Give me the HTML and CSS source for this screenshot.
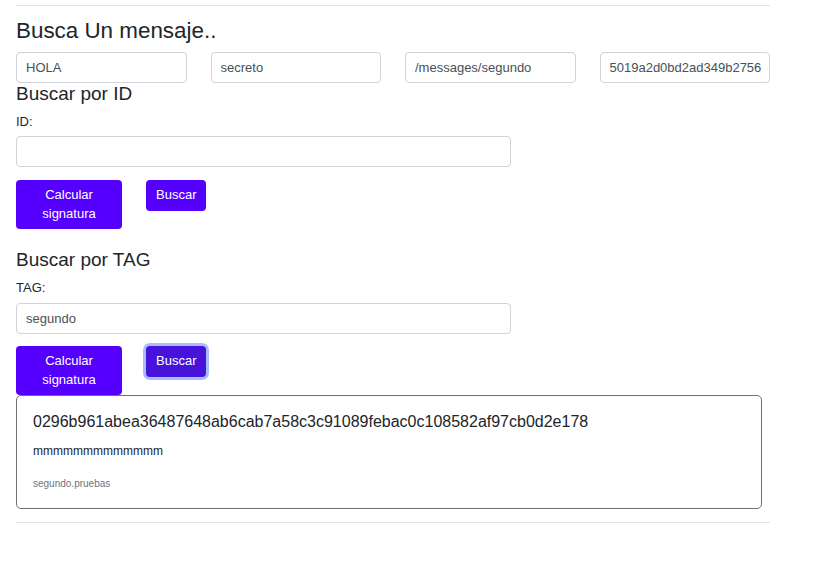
FILE: index.html
```html
<!DOCTYPE html>
<html lang="es">
<head>
<meta charset="utf-8">
<title>Busca Un mensaje</title>
<link rel="stylesheet" href="styles.css">
</head>
<body>
<div class="page">
  <hr class="rule rule-top">
  <h2 class="title">Busca Un mensaje..</h2>
  <div class="fields">
    <input class="field" type="text" value="HOLA">
    <input class="field" type="text" value="secreto">
    <input class="field" type="text" value="/messages/segundo">
    <input class="field" type="text" value="5019a2d0bd2ad349b2756">
  </div>

  <section class="search">
    <h3 class="sub">Buscar por ID</h3>
    <label class="label">ID:</label>
    <input class="field wide" type="text" value="">
    <div class="actions">
      <button class="btn btn-calc">Calcular signatura</button>
      <button class="btn">Buscar</button>
    </div>
  </section>

  <section class="search second">
    <h3 class="sub">Buscar por TAG</h3>
    <label class="label">TAG:</label>
    <input class="field wide" type="text" value="segundo">
    <div class="actions">
      <button class="btn btn-calc">Calcular signatura</button>
      <button class="btn focused">Buscar</button>
    </div>
  </section>

  <div class="card">
    <div class="hash">0296b961abea36487648ab6cab7a58c3c91089febac0c108582af97cb0d2e178</div>
    <div class="msg">mmmmmmmmmmmmm</div>
    <div class="tag">segundo.pruebas</div>
  </div>
  <hr class="rule rule-bottom">
</div>
</body>
</html>
```
FILE: styles.css
```css
* { box-sizing: border-box; }
html, body { margin: 0; padding: 0; background: #fff; }
body {
  font-family: "Liberation Sans", Arial, sans-serif;
  color: #212529;
  font-size: 13px;
  line-height: 1.5;
}
.page {
  width: 754px;
  margin-left: 16px;
  padding-top: 5px;
}
.rule {
  border: 0;
  border-top: 1px solid #e3e3e3;
  margin: 0;
}
.title {
  font-size: 22.4px;
  font-weight: 400;
  line-height: 1.2;
  margin: 12px 0 7px;
}
.fields {
  display: grid;
  grid-template-columns: repeat(4, 1fr);
  column-gap: 24px;
}
.field {
  display: block;
  height: 31px;
  padding: 0 0 0 9px;
  font-family: "Liberation Sans", Arial, sans-serif;
  font-size: 13px;
  color: #495057;
  border: 1px solid #ced4da;
  border-radius: 4px;
  background: #fff;
  width: 100%;
  outline: none;
}
.field.wide { width: 495px; }
.sub {
  font-size: 19px;
  font-weight: 400;
  line-height: 1.2;
  margin: 0;
}
.second .sub { margin-top: 20px; }
.label {
  display: block;
  font-size: 13px;
  line-height: 19.5px;
  margin: 6px 0 5px;
}
.second .label { margin-bottom: 6px; }
.actions {
  display: flex;
  align-items: flex-start;
  gap: 24px;
  margin-top: 13px;
}
.second .actions { margin-top: 12px; }
.btn {
  font-family: "Liberation Sans", Arial, sans-serif;
  font-size: 13px;
  line-height: 18.5px;
  padding: 6px 10px;
  color: #fff;
  background: #5500ff;
  border: 0;
  border-radius: 4px;
}
.btn-calc { width: 106px; }
.btn.focused {
  background: #4712d9;
  box-shadow: 0 0 0 3px rgba(130, 160, 255, 0.7);
}
.card {
  width: 746px;
  border: 1px solid #707070;
  border-radius: 5px;
  padding: 16px 16px 17px;
}
.hash {
  font-size: 16px;
  line-height: 1.2;
  margin-bottom: 10px;
}
.msg {
  font-size: 12px;
  line-height: 18px;
  margin-bottom: 16px;
}
.tag {
  font-size: 10px;
  line-height: 15px;
  color: #6c757d;
}
.rule-bottom { margin-top: 13px; }
```
